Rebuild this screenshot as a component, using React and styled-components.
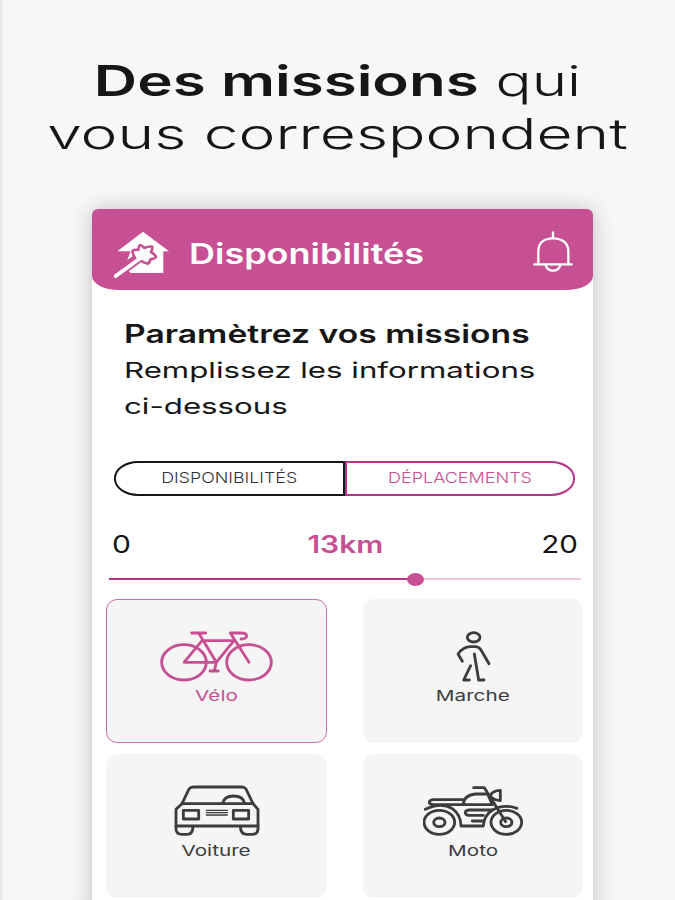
import React from "react";
import styled, { createGlobalStyle } from "styled-components";

const PINK = "#c74f93";
const MAGENTA = "#b5338a";

function Logo() {
  return (
    <svg width="56" height="48" viewBox="28 18 168 144">
      <path d="M115 23L193 82H176V147H78L60 128L78 82H38Z" fill="#fff" />
      <path d="M48 140L98 105" stroke={PINK} strokeWidth="30" />
      <path
        d="M106 63Q112 63 119 72Q132 66 142 68Q145 74 139 84Q152 92 154 99Q149 105 137 106Q136 115 130 119Q118 117 110 111L96 112L89 98Q82 86 84 80Q90 76 101 78Q101 67 106 63Z"
        fill="#fff"
        stroke={PINK}
        strokeWidth="8"
        strokeLinejoin="round"
      />
      <path
        d="M33 156L108 102"
        stroke="#fff"
        strokeWidth="12"
        strokeLinecap="round"
      />
    </svg>
  );
}

function Bell() {
  return (
    <svg width="40" height="41" viewBox="578 92 120 123">
      <g fill="none" stroke="#fff" strokeWidth="7" strokeLinecap="round">
        <path d="M594 192V153C594 128 611 114 638 114S684 128 684 153V192" />
        <path d="M582 192H694M638 96V113" />
        <path d="M616 194Q620 211 638 211T660 194" />
      </g>
    </svg>
  );
}

function Bike() {
  return (
    <Icon width="115" height="52" viewBox="178 108 345 156">
      <ellipse cx="253" cy="205" rx="67" ry="53" />
      <ellipse cx="448" cy="205" rx="67" ry="53" />
      <path d="M276 117H318M297 117L350 205H253L307 140H403L350 205L344 230M331 231H356" />
      <path d="M448 205L392 117H427Q441 118 441 126T424 135" />
    </Icon>
  );
}

function Walk() {
  return (
    <Icon width="37" height="52" viewBox="299 105 111 156">
      <ellipse cx="355" cy="127" rx="19" ry="14" />
      <path d="M321 199L308 177Q324 155 345 155H361Q372 156 377 165L401 206" />
      <path d="M357 177L370 255H386M346 212L325 255H342" />
    </Icon>
  );
}

function Car() {
  return (
    <Icon width="86" height="52" viewBox="222 105 258 156">
      <path d="M246 161L267 117Q271 111 280 111H425Q434 111 438 117L459 161" />
      <path d="M246 161H459L474 178V228H228V178Z" />
      <path d="M250 181H296V207H250ZM400 181H446V207H400Z" />
      <path d="M228 228V238Q230 253 245 253H262Q278 253 279 230M474 228V238Q472 253 457 253H440Q422 253 421 230" />
      <path d="M368 160Q373 138 401 138T434 160" />
      <path d="M319 181H382M319 188H382M319 195H382" strokeWidth="4" />
    </Icon>
  );
}

function Motorbike() {
  return (
    <Icon width="101" height="52" viewBox="204 105 303 156">
      <ellipse cx="253" cy="217" rx="46" ry="36" />
      <ellipse cx="454" cy="217" rx="46" ry="36" />
      <ellipse cx="253" cy="217" rx="17" ry="13" />
      <ellipse cx="454" cy="217" rx="17" ry="13" />
      <path d="M325 149H235Q223 150 223 157T235 164H412L398 132H362Q325 136 325 164" />
      <path d="M356 113H388L452 215M436 121V152Q411 150 406 136Q412 122 436 121Z" />
      <path d="M211 178Q258 155 292 176Q318 195 318 228H385Q388 186 430 172Q460 165 486 175" />
      <path d="M412 180H342Q331 181 331 188T342 196H385M352 213H385" />
    </Icon>
  );
}

const modes = [
  { name: "Vélo", icon: <Bike />, active: true },
  { name: "Marche", icon: <Walk /> },
  { name: "Voiture", icon: <Car /> },
  { name: "Moto", icon: <Motorbike /> },
];

function App() {
  const distance = 13;
  const max = 20;

  return (
    <Page>
      <GlobalStyle />
      <Title>
        <Wide $stretch={1.43}>
          <b>Des missions</b> qui
        </Wide>
        <Wide $stretch={1.482}>vous correspondent</Wide>
      </Title>
      <Phone>
        <Header>
          <Logo />
          <HeaderTitle>
            <Wide $stretch={1.285} $left>
              Disponibilités
            </Wide>
          </HeaderTitle>
          <Bell />
        </Header>
        <Intro>
          <IntroTitle>
            <Wide $stretch={1.346} $left>
              Paramètrez vos missions
            </Wide>
          </IntroTitle>
          <IntroText>
            <Wide $stretch={1.42} $left>
              Remplissez les informations
            </Wide>
            <Wide $stretch={1.42} $left>
              ci-dessous
            </Wide>
          </IntroText>
        </Intro>
        <Tabs>
          <Tab>
            <Wide $stretch={1.19}>DISPONIBILITÉS</Wide>
          </Tab>
          <Tab $active>
            <Wide $stretch={1.2}>DÉPLACEMENTS</Wide>
          </Tab>
        </Tabs>
        <Range>
          <Wide $stretch={1.25} $left>
            0
          </Wide>
          <Distance>
            <Wide $stretch={1.25}>{distance}km</Wide>
          </Distance>
          <Wide $stretch={1.23} $right>
            {max}
          </Wide>
        </Range>
        <Track>
          <Fill style={{ width: `${(distance / max) * 100}%` }} />
          <Thumb />
        </Track>
        <Grid>
          {modes.map((mode) => (
            <Tile key={mode.name} $active={mode.active}>
              {mode.icon}
              <Wide $stretch={1.38}>{mode.name}</Wide>
            </Tile>
          ))}
        </Grid>
      </Phone>
    </Page>
  );
}

const GlobalStyle = createGlobalStyle`
  body {
    margin: 0;
    overflow: hidden;
  }
`;

const Page = styled.div`
  box-sizing: border-box;
  height: 900px;
  padding-top: 54px;
  overflow: hidden;
  background: #f7f7f7;
  box-shadow: inset 3px 0 2px -1px #e6e6e6;
  color: #161616;
  font-family: Inter, "Liberation Sans", sans-serif;
`;

const Wide = styled.span`
  display: block;
  white-space: nowrap;
  transform: scaleX(${(props) => props.$stretch});
  transform-origin: ${(props) =>
    props.$left ? "left" : props.$right ? "right" : "center"};
`;

const Title = styled.h1`
  margin: 0;
  height: 155px;
  font-size: 42px;
  line-height: 53px;
  font-weight: 300;
  text-align: center;

  b {
    font-weight: 600;
  }
`;

const Phone = styled.main`
  width: 501px;
  height: 720px;
  margin-left: 92px;
  border-radius: 6px 6px 0 0;
  background: #fff;
  box-shadow: 0 0 22px rgba(0, 0, 0, 0.22);
`;

const Header = styled.header`
  display: flex;
  align-items: center;
  box-sizing: border-box;
  height: 81px;
  padding: 9px 20px 0 22px;
  border-radius: 6px 6px 27px 27px / 6px 6px 14px 14px;
  background: ${PINK};

  svg:last-child {
    margin-bottom: 6px;
  }
`;

const HeaderTitle = styled.div`
  flex: 1;
  margin-left: 19px;
  color: #fff;
  font-size: 28px;
  font-weight: 600;
`;

const Intro = styled.section`
  height: 171px;
  padding-left: 32px;
  box-sizing: border-box;
  padding-top: 26px;
`;

const IntroTitle = styled.h2`
  margin: 0;
  font-size: 25px;
  font-weight: 600;
  line-height: 36px;
`;

const IntroText = styled.div`
  font-size: 22px;
  line-height: 36px;
`;

const Tabs = styled.div`
  display: flex;
  margin: 0 18px 0 22px;
`;

const Tab = styled.div`
  display: flex;
  align-items: center;
  justify-content: center;
  box-sizing: border-box;
  width: 50%;
  height: 35px;
  padding-bottom: 3px;
  border: 2px solid ${(props) => (props.$active ? MAGENTA : "#161616")};
  border-radius: ${(props) =>
    props.$active ? "0 24px 24px 0 / 0 17px 17px 0" : "24px 0 0 24px / 17px 0 0 17px"};
  color: ${(props) => (props.$active ? PINK : "#333")};
  font-size: 15px;
  font-weight: 300;
`;

const Range = styled.div`
  display: flex;
  justify-content: space-between;
  margin: 32px 15px 0 20px;
  font-size: 24px;
  line-height: 34px;
`;

const Distance = styled.strong`
  padding-left: 15px;
  color: ${PINK};
  font-weight: 600;
`;

const Track = styled.div`
  display: flex;
  align-items: center;
  height: 14px;
  margin: 10px 12px 0 17px;
  background: linear-gradient(#edc6dc, #edc6dc) center / 100% 2px no-repeat;
`;

const Fill = styled.div`
  height: 2px;
  background: ${MAGENTA};
`;

const Thumb = styled.div`
  width: 17px;
  height: 13px;
  margin-left: -9px;
  border-radius: 50%;
  background: ${PINK};
`;

const Grid = styled.div`
  display: grid;
  grid-template-columns: 221px 220px;
  gap: 11px 36px;
  margin: 13px 0 0 14px;
`;

const Tile = styled.div`
  display: flex;
  flex-direction: column;
  align-items: center;
  box-sizing: border-box;
  height: 144px;
  padding-top: 30px;
  border: 1px solid ${(props) => (props.$active ? "#cf6ba4" : "#f5f5f5")};
  border-radius: 11px;
  background: #f5f5f5;
  color: ${(props) => (props.$active ? PINK : "#3c3c3c")};
  font-size: 15px;
  line-height: 27px;
`;

const Icon = styled.svg`
  fill: none;
  stroke: currentColor;
  stroke-width: 8.5;
  stroke-linecap: round;
  stroke-linejoin: round;
`;

export default App;
